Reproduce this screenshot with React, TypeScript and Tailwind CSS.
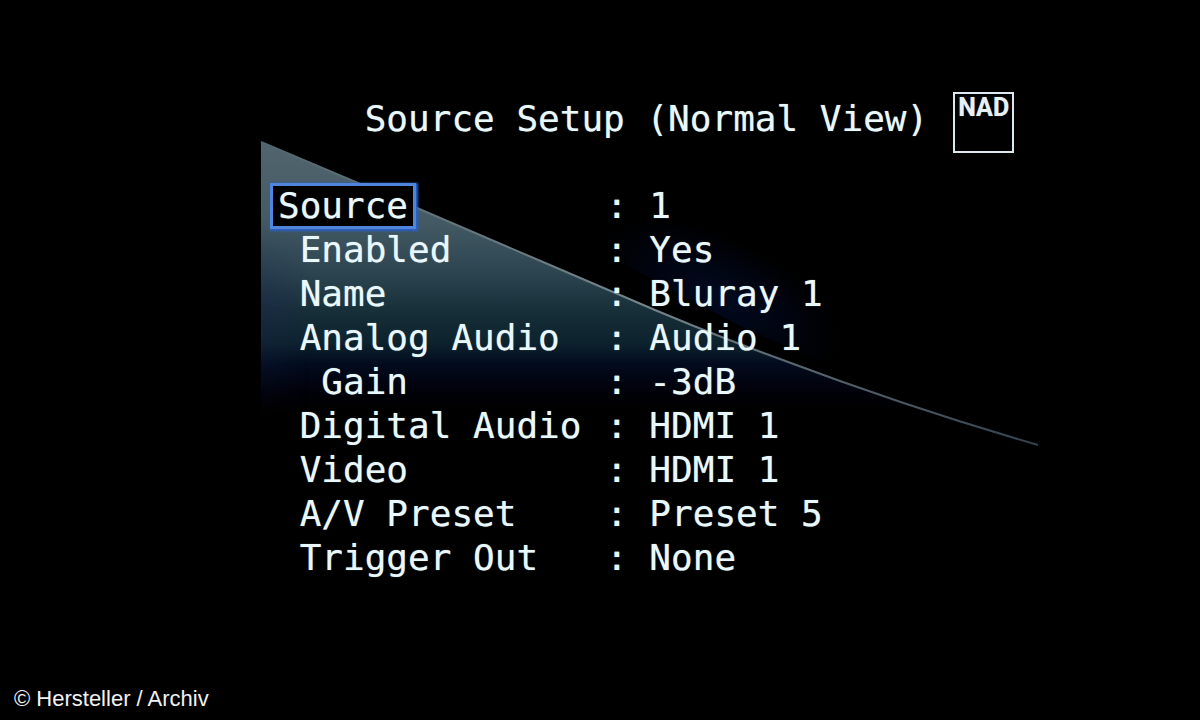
type Setting = { label: string; value: string; level: 0 | 1 | 2; selected?: boolean };

const settings: Setting[] = [
  { label: 'Source', value: '1', level: 0, selected: true },
  { label: 'Enabled', value: 'Yes', level: 1 },
  { label: 'Name', value: 'Bluray 1', level: 1 },
  { label: 'Analog Audio', value: 'Audio 1', level: 1 },
  { label: 'Gain', value: '-3dB', level: 2 },
  { label: 'Digital Audio', value: 'HDMI 1', level: 1 },
  { label: 'Video', value: 'HDMI 1', level: 1 },
  { label: 'A/V Preset', value: 'Preset 5', level: 1 },
  { label: 'Trigger Out', value: 'None', level: 1 },
];

const indents = ['pl-0', 'pl-[1ch]', 'pl-[2ch]'];

function Backdrop() {
  return (
    <svg
      className="absolute left-0 top-0 h-[560px] w-[780px]"
      viewBox="260 0 780 560"
      fill="none"
      aria-hidden="true"
    >
      <defs>
        <linearGradient id="sweep" x1="0" y1="142" x2="0" y2="410" gradientUnits="userSpaceOnUse">
          <stop offset="0" stopColor="#52656e" />
          <stop offset="0.3" stopColor="#435a65" />
          <stop offset="0.5" stopColor="#2b434e" />
          <stop offset="0.62" stopColor="#18303a" />
          <stop offset="0.75" stopColor="#0c222d" />
          <stop offset="0.83" stopColor="#020b1e" />
          <stop offset="0.92" stopColor="#01020b" />
          <stop offset="1" stopColor="#000000" />
        </linearGradient>
        <linearGradient id="edge" x1="260" y1="0" x2="1040" y2="0" gradientUnits="userSpaceOnUse">
          <stop offset="0" stopColor="#52656e" />
          <stop offset="0.5" stopColor="#74848b" />
          <stop offset="0.65" stopColor="#5c6b74" />
          <stop offset="1" stopColor="#34424e" />
        </linearGradient>
        <linearGradient id="side" x1="260" y1="0" x2="310" y2="0" gradientUnits="userSpaceOnUse">
          <stop offset="0" stopColor="#1c2450" stopOpacity="0.4" />
          <stop offset="1" stopColor="#1c2450" stopOpacity="0" />
        </linearGradient>
        <linearGradient id="sideFade" x1="0" y1="220" x2="0" y2="420" gradientUnits="userSpaceOnUse">
          <stop offset="0" stopColor="#000" />
          <stop offset="0.4" stopColor="#fff" />
          <stop offset="1" stopColor="#000" />
        </linearGradient>
        <mask id="sideMask">
          <rect x="260" y="220" width="50" height="200" fill="url(#sideFade)" />
        </mask>
        <radialGradient
          id="glow"
          cx="0"
          cy="0"
          r="1"
          gradientUnits="userSpaceOnUse"
          gradientTransform="translate(720 298) rotate(26) scale(130 60)"
        >
          <stop offset="0" stopColor="#020a20" />
          <stop offset="0.5" stopColor="#010512" />
          <stop offset="1" stopColor="#000000" />
        </radialGradient>
      </defs>
      <path d="M570 200 L850 200 L850 374 L740 326 L622 263Z" fill="url(#glow)" />
      <path d="M261 142 L417 208 L550 265 L620 295 Q700 330 780 359 Q910 408 1038 445 L261 445Z" fill="url(#sweep)" />
      <rect x="261" y="220" width="50" height="200" fill="url(#side)" mask="url(#sideMask)" />
      <path d="M261 142 L417 208 L550 265 L620 295 Q700 330 780 359 Q910 408 1038 445" stroke="url(#edge)" strokeWidth="2" />
    </svg>
  );
}

function NadLogo() {
  return (
    <div className="flex h-[61px] w-[61px] justify-center border-2 border-[#dce8f0] font-[Roboto,sans-serif] text-[25px] leading-[28px] font-bold text-[#e6f0f5]">
      NAD
    </div>
  );
}

export default function App() {
  return (
    <div className="flex min-h-screen flex-col bg-black">
      <main className="relative ml-[260px] grow pt-[92px] pl-[18px] font-['DejaVu_Sans_Mono',monospace] text-[36px] leading-[44px] text-[#e8f8fc] text-shadow-[0_0_1px_#e8f8fc99]">
        <Backdrop />
        <header className="relative flex items-start gap-[25px] pl-[4ch] whitespace-nowrap">
          <h1 className="pt-[5px]">Source Setup (Normal View)</h1>
          <NadLogo />
        </header>
        <dl className="relative pt-[31px]">
          {settings.map(({ label, value, level, selected }) => (
            <div key={label} className="flex whitespace-nowrap">
              <dt className={`w-[328px] shrink-0 ${indents[level]}`}>
                <button
                  type="button"
                  className={
                    selected
                      ? '-mx-[5px] my-[2px] block bg-black px-[5px] leading-[40px] outline-3 outline-[#4f86dc] shadow-[1px_1px_2px_4px_#2a60c8] text-shadow-[0_0_1px_#e8f8fc99]'
                      : 'block text-shadow-[0_0_1px_#e8f8fc99]'
                  }
                >
                  {label}
                </button>
              </dt>
              <dd className="flex gap-[1ch]">
                <span>:</span>
                <span>{value}</span>
              </dd>
            </div>
          ))}
        </dl>
      </main>
      <footer className="relative px-[14px] pb-[7px] font-['Liberation_Sans',sans-serif] text-[22px] leading-7 text-[#f2f2f2]">
        © Hersteller / Archiv
      </footer>
    </div>
  );
}
